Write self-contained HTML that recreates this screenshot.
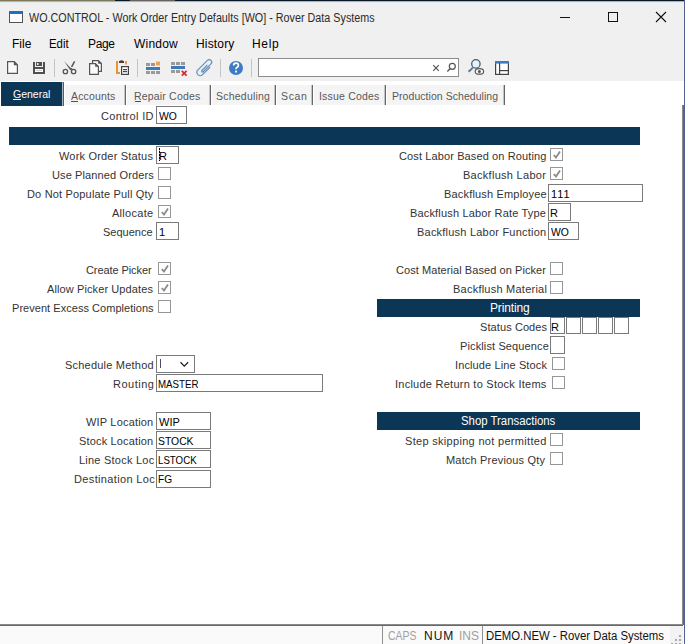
<!DOCTYPE html>
<html><head><meta charset="utf-8">
<style>
html,body{margin:0;padding:0;}
body{width:685px;height:644px;overflow:hidden;position:relative;background:#f0f0f0;font-family:"Liberation Sans",sans-serif;color:#333;}
.a{position:absolute;}
.t{position:absolute;white-space:pre;line-height:20px;height:20px;}
.inp{position:absolute;box-sizing:border-box;border:1px solid #7a7a7a;background:#fff;height:18px;}
.cb{position:absolute;box-sizing:border-box;width:13px;height:13px;border:1px solid #969696;background:#fff;}
.bar{position:absolute;background:#0b3656;height:18px;}
.tabbg{position:absolute;background:#f4f4f4;top:85px;height:20px;}
.tsep{position:absolute;top:85px;width:2px;height:20px;background:linear-gradient(90deg,#c4c4c4 0,#c4c4c4 50%,#666 50%);}
</style></head>
<body>
<!-- top strip -->
<div class="a" style="left:0;top:0;width:685px;height:1px;background:#0b1826"></div>
<div class="a" style="left:0;top:0;width:115px;height:1px;background:#7f7b5a"></div>
<div class="a" style="left:130px;top:0;width:45px;height:1px;background:#6c625c"></div>
<div class="a" style="left:0;top:1px;width:685px;height:1px;background:#a8b4be"></div>
<div class="a" style="left:0;top:2px;width:685px;height:1px;background:#e6eef4"></div>
<!-- right border -->
<div class="a" style="left:684px;top:0;width:1px;height:644px;background:#52628e;z-index:5"></div>

<!-- title icon & controls -->
<div class="a" style="left:9px;top:11px;width:14px;height:12px;box-sizing:border-box;border:1px solid #555;border-top:3px solid #1f6fc8;background:#fcfcfc"></div>
<div class="a" style="left:560px;top:17px;width:10px;height:1px;background:#111"></div>
<div class="a" style="left:608px;top:12px;width:10px;height:10px;box-sizing:border-box;border:1px solid #111"></div>
<svg class="a" style="left:655px;top:11px" width="12" height="12" viewBox="0 0 12 12"><path d="M1 1L11 11M11 1L1 11" stroke="#111" stroke-width="1.1"/></svg>

<!-- toolbar -->
<svg class="a" style="left:0;top:56px" width="520" height="24" viewBox="0 56 520 24">
 <path d="M7.6 61.6H14.2L17.4 64.8V73.4H7.6Z" fill="#fbfbfb" stroke="#555" stroke-width="1.2"/>
 <path d="M13.8 61.2V65.2H17.8Z" fill="#555"/>
 <rect x="33" y="62" width="2" height="12" fill="#505050"/>
 <rect x="43" y="62" width="2" height="12" fill="#505050"/>
 <rect x="35" y="67" width="8" height="2" fill="#505050"/>
 <rect x="35" y="72" width="8" height="2" fill="#505050"/>
 <rect x="36" y="62" width="6" height="4" fill="#505050"/>
 <rect x="37" y="63" width="1.5" height="2" fill="#f0f0f0"/>
 <rect x="35" y="69" width="8" height="3" fill="#fafafa"/>
 <rect x="36" y="70" width="6" height="1" fill="#d0d0d0"/>
 <rect x="54" y="59" width="1" height="18" fill="#c4c4c4"/>
 <path d="M64.2 61.2L71.8 69.2L70.2 70.2Z" fill="#555"/>
 <path d="M74.6 61.4L71.6 66.8" stroke="#555" stroke-width="1.5"/>
 <path d="M70.5 69.5L72 68.2" stroke="#555" stroke-width="1.2"/>
 <circle cx="65.4" cy="71.5" r="2.2" fill="none" stroke="#555" stroke-width="1.3"/>
 <circle cx="73.6" cy="71.5" r="2.2" fill="none" stroke="#555" stroke-width="1.3"/>
 <path d="M92.6 63.6V60.6H98.4L101.4 63.6V71.4H98.6" fill="#fafafa" stroke="#555" stroke-width="1.2"/>
 <path d="M98.2 60.2V63.8H101.8Z" fill="#555"/>
 <path d="M89.6 63.6H95.4L98.4 66.6V74.4H89.6Z" fill="#fafafa" stroke="#555" stroke-width="1.2"/>
 <path d="M95.2 63.2V66.8H98.8Z" fill="#555"/>
 <rect x="116" y="61" width="2" height="13" fill="#f0902e"/>
 <rect x="118" y="72" width="2" height="2" fill="#f0902e"/>
 <rect x="125" y="61" width="2" height="3.5" fill="#e8a050"/>
 <path d="M119 63V61.2Q121.5 59.4 124 61.2V63Z" fill="#553c2c"/>
 <rect x="121.6" y="66.6" width="6.8" height="7.8" fill="#fff" stroke="#444" stroke-width="1.2"/>
 <rect x="123" y="69" width="4" height="1.2" fill="#444"/>
 <rect x="123" y="71" width="4" height="1.2" fill="#444"/>
 <rect x="137" y="59" width="1" height="18" fill="#c4c4c4"/>
 <rect x="146" y="63" width="4" height="3" fill="#9a9a9a"/><rect x="151" y="63" width="4" height="3" fill="#9a9a9a"/><rect x="156" y="61.5" width="4" height="4" fill="#f0a24a"/>
 <rect x="146" y="67" width="14" height="3" fill="#3f79b6"/>
 <rect x="146" y="71" width="4" height="3" fill="#9a9a9a"/><rect x="151" y="71" width="4" height="3" fill="#9a9a9a"/><rect x="156" y="71" width="4" height="3" fill="#9a9a9a"/>
 <rect x="171" y="62" width="4" height="3" fill="#9a9a9a"/><rect x="176" y="62" width="4" height="3" fill="#9a9a9a"/><rect x="181" y="62" width="4" height="3" fill="#9a9a9a"/>
 <rect x="171" y="66" width="14" height="3" fill="#3f79b6"/>
 <rect x="171" y="70" width="4" height="3" fill="#9a9a9a"/><rect x="176" y="70" width="4" height="3" fill="#9a9a9a"/>
 <path d="M181.8 70.8L186.6 75.6M186.6 70.8L181.8 75.6" stroke="#d02838" stroke-width="1.7"/>
 <g transform="translate(205 67.5) rotate(-45)">
  <path d="M4 3.3H-6.7A3.3 3.3 0 0 1 -6.7 -3.3H6.7A2.5 2.5 0 0 1 6.7 1.7H-4.3A0.9 0.9 0 0 1 -4.3 -0.1H3.5" fill="#e4f2fb" stroke="#6a8cb6" stroke-width="1.15"/>
 </g>
 <rect x="220" y="59" width="1" height="18" fill="#c4c4c4"/>
 <circle cx="236" cy="68" r="7" fill="#3f7bc4"/>
 <path d="M233.6 65.6Q233.6 63.2 236 63.2Q238.4 63.2 238.4 65.4Q238.4 66.8 236.8 67.6Q236 68 236 69.2" fill="none" stroke="#fff" stroke-width="1.7"/>
 <rect x="235.1" y="70.6" width="1.9" height="1.9" fill="#fff"/>
 <rect x="251" y="59" width="1" height="18" fill="#c4c4c4"/>
 <rect x="258.5" y="58.5" width="200" height="18" fill="#fff" stroke="#8c8c8c"/>
 <path d="M433.2 65.2L438.8 70.8M438.8 65.2L433.2 70.8" stroke="#555" stroke-width="1.2"/>
 <circle cx="452.3" cy="66.3" r="3" fill="none" stroke="#555" stroke-width="1.2"/>
 <path d="M450 68.8L447.3 71.5" stroke="#555" stroke-width="1.4"/>
 <circle cx="475.9" cy="63.9" r="4.2" fill="#e6f2fa" stroke="#4c5a68" stroke-width="1.3"/>
 <path d="M472.9 67.6L468.6 71.8" stroke="#5878a0" stroke-width="2"/>
 <ellipse cx="479.4" cy="71.4" rx="4.2" ry="2.8" fill="#fff" stroke="#555" stroke-width="1.2"/>
 <circle cx="479.4" cy="71.4" r="1.5" fill="#555"/>
 <rect x="495.6" y="61.6" width="12.8" height="12.8" fill="#fff" stroke="#444" stroke-width="1.2"/>
 <rect x="495" y="61" width="14" height="2.6" fill="#3f7bc4"/>
 <rect x="499" y="63" width="1.2" height="11" fill="#444"/>
 <rect x="499" y="70" width="9" height="1.2" fill="#444"/>
</svg>

<!-- content area -->
<div class="a" style="left:0;top:81px;width:684px;height:543px;background:#fff"></div>
<div class="a" style="left:682px;top:105px;width:1px;height:520px;background:#8a8a8a"></div><div class="a" style="left:683px;top:105px;width:1px;height:520px;background:#606878"></div>

<!-- tabs -->
<div class="a" style="left:1px;top:82px;width:61px;height:24px;background:#0b3656"></div>
<div class="a" style="left:62px;top:82px;width:1px;height:24px;background:#a8b6c4"></div><div class="a" style="left:63px;top:82px;width:1px;height:24px;background:#5a5a5a"></div>
<div class="a" style="left:13px;top:99px;width:8px;height:1px;background:#fff"></div>
<div class="tabbg" style="left:65px;width:59px"></div>
<div class="a" style="left:71px;top:101px;width:7px;height:1px;background:#505050"></div>
<div class="tsep" style="left:124px"></div>
<div class="tabbg" style="left:127px;width:82px"></div>
<div class="a" style="left:135px;top:101px;width:6px;height:1px;background:#505050"></div>
<div class="tsep" style="left:209px"></div>
<div class="tabbg" style="left:212px;width:62px"></div>
<div class="tsep" style="left:274px"></div>
<div class="tabbg" style="left:277px;width:34px"></div>
<div class="tsep" style="left:311px"></div>
<div class="tabbg" style="left:314px;width:70px"></div>
<div class="tsep" style="left:384px"></div>
<div class="tabbg" style="left:387px;width:116px"></div>
<div class="tsep" style="left:503px"></div>

<!-- bars -->
<div class="bar" style="left:9px;top:127px;width:631px"></div>
<div class="bar" style="left:377px;top:299px;width:263px"></div>
<div class="bar" style="left:377px;top:412px;width:263px"></div>

<!-- inputs -->
<div class="inp" style="left:156px;top:106px;width:31px"></div>
<div class="inp" style="left:156px;top:146px;width:23px"></div>
<div class="a" style="left:159px;top:148px;width:1px;height:13px;background:repeating-linear-gradient(180deg,#000 0,#000 2px,#bbb 2px,#bbb 3px)"></div>
<div class="inp" style="left:156px;top:222px;width:23px"></div>
<div class="inp" style="left:156px;top:355px;width:39px;height:18px"></div>
<svg class="a" style="left:179px;top:361px" width="12" height="8" viewBox="0 0 12 8"><path d="M1.5 1.3L5.3 5.1L9.1 1.3" fill="none" stroke="#222" stroke-width="1.3"/></svg>
<div class="a" style="left:160px;top:359px;width:1px;height:9px;background:#4a4e66"></div>
<div class="inp" style="left:156px;top:374px;width:167px"></div>
<div class="inp" style="left:156px;top:412px;width:55px"></div>
<div class="inp" style="left:156px;top:431px;width:55px"></div>
<div class="inp" style="left:156px;top:450px;width:55px"></div>
<div class="inp" style="left:156px;top:470px;width:55px"></div>
<div class="inp" style="left:548px;top:184px;width:95px"></div>
<div class="inp" style="left:548px;top:203px;width:23px"></div>
<div class="inp" style="left:548px;top:222px;width:31px"></div>
<div class="inp" style="left:550px;top:317px;width:15px;height:17px"></div>
<div class="inp" style="left:566px;top:317px;width:15px;height:17px"></div>
<div class="inp" style="left:582px;top:317px;width:15px;height:17px"></div>
<div class="inp" style="left:598px;top:317px;width:15px;height:17px"></div>
<div class="inp" style="left:614px;top:317px;width:15px;height:17px"></div>
<div class="inp" style="left:550px;top:336px;width:15px"></div>

<!-- checkboxes -->
<div class="cb" style="left:158px;top:167px"></div>
<div class="cb" style="left:158px;top:186px"></div>
<div class="cb" style="left:158px;top:205px"><svg class="a" style="left:0;top:0" width="11" height="11" viewBox="0 0 11 11"><path d="M2.8 6L5 8.6L9 2.5" fill="none" stroke="#8a8a8a" stroke-width="1.8"/></svg></div>
<div class="cb" style="left:158px;top:262px"><svg class="a" style="left:0;top:0" width="11" height="11" viewBox="0 0 11 11"><path d="M2.8 6L5 8.6L9 2.5" fill="none" stroke="#8a8a8a" stroke-width="1.8"/></svg></div>
<div class="cb" style="left:158px;top:281px"><svg class="a" style="left:0;top:0" width="11" height="11" viewBox="0 0 11 11"><path d="M2.8 6L5 8.6L9 2.5" fill="none" stroke="#8a8a8a" stroke-width="1.8"/></svg></div>
<div class="cb" style="left:158px;top:300px"></div>
<div class="cb" style="left:550px;top:148px"><svg class="a" style="left:0;top:0" width="11" height="11" viewBox="0 0 11 11"><path d="M2.8 6L5 8.6L9 2.5" fill="none" stroke="#8a8a8a" stroke-width="1.8"/></svg></div>
<div class="cb" style="left:550px;top:167px"><svg class="a" style="left:0;top:0" width="11" height="11" viewBox="0 0 11 11"><path d="M2.8 6L5 8.6L9 2.5" fill="none" stroke="#8a8a8a" stroke-width="1.8"/></svg></div>
<div class="cb" style="left:550px;top:262px"></div>
<div class="cb" style="left:550px;top:281px"></div>
<div class="cb" style="left:552px;top:357px"></div>
<div class="cb" style="left:552px;top:376px"></div>
<div class="cb" style="left:550px;top:433px"></div>
<div class="cb" style="left:550px;top:452px"></div>

<!-- status bar -->
<div class="a" style="left:0;top:625px;width:684px;height:19px;background:#fafafa"></div>
<div class="a" style="left:0;top:624px;width:683px;height:1px;background:#8a8a8a"></div>
<div class="a" style="left:0;top:625px;width:683px;height:1px;background:#686868"></div>
<div class="a" style="left:382px;top:626px;width:1px;height:18px;background:#8e8e8e"></div>
<div class="a" style="left:482px;top:626px;width:1px;height:18px;background:#8e8e8e"></div>
<div class="a" style="left:670px;top:626px;width:13px;height:18px;background:#f2f2f2"></div>
<div class="a" style="left:679px;top:635px;width:2px;height:2px;background:#a8a8a8"></div>
<div class="a" style="left:675px;top:639px;width:2px;height:2px;background:#a8a8a8"></div>
<div class="a" style="left:679px;top:639px;width:2px;height:2px;background:#a8a8a8"></div>
<div class="a" style="left:671px;top:643px;width:2px;height:1px;background:#a8a8a8"></div>
<div class="a" style="left:675px;top:643px;width:2px;height:1px;background:#a8a8a8"></div>
<div class="a" style="left:679px;top:643px;width:2px;height:1px;background:#a8a8a8"></div>
<div class="t" id="t0" style="left:29.00px;top:8px;font-size:12px;color:#2a2a2a;letter-spacing:0.018px;transform:scaleX(0.8958);transform-origin:0 0;">WO.CONTROL - Work Order Entry Defaults [WO] - Rover Data Systems</div>
<div class="t" id="t1" style="left:12.00px;top:34px;font-size:12px;color:#000;letter-spacing:0.000px;">File</div>
<div class="t" id="t2" style="left:49.00px;top:34px;font-size:12px;color:#000;letter-spacing:0.000px;transform:scaleX(0.9474);transform-origin:0 0;">Edit</div>
<div class="t" id="t3" style="left:88.00px;top:34px;font-size:12px;color:#000;letter-spacing:-0.333px;">Page</div>
<div class="t" id="t4" style="left:134.00px;top:34px;font-size:12px;color:#000;letter-spacing:0.200px;">Window</div>
<div class="t" id="t5" style="left:196.00px;top:34px;font-size:12px;color:#000;letter-spacing:0.167px;">History</div>
<div class="t" id="t6" style="left:252.00px;top:34px;font-size:12px;color:#000;letter-spacing:0.667px;">Help</div>
<div class="t" id="t7" style="left:13.00px;top:84px;font-size:10.5px;color:#fff;letter-spacing:0.000px;">General</div>
<div class="t" id="t8" style="left:71.00px;top:86px;font-size:10.5px;color:#585858;letter-spacing:0.143px;">Accounts</div>
<div class="t" id="t9" style="left:134.00px;top:86px;font-size:10.5px;color:#585858;letter-spacing:0.182px;">Repair Codes</div>
<div class="t" id="t10" style="left:216.00px;top:86px;font-size:10.5px;color:#585858;letter-spacing:0.222px;">Scheduling</div>
<div class="t" id="t11" style="left:281.00px;top:86px;font-size:10.5px;color:#585858;letter-spacing:0.667px;">Scan</div>
<div class="t" id="t12" style="left:319.00px;top:86px;font-size:10.5px;color:#585858;letter-spacing:0.200px;">Issue Codes</div>
<div class="t" id="t13" style="left:392.00px;top:86px;font-size:10.5px;color:#585858;letter-spacing:0.050px;">Production Scheduling</div>
<div class="t" id="t14" style="left:101.00px;top:106px;font-size:11px;color:#333;letter-spacing:0.333px;">Control ID</div>
<div class="t" id="t15" style="left:59.00px;top:146px;font-size:11px;color:#333;letter-spacing:0.188px;">Work Order Status</div>
<div class="t" id="t16" style="left:52.00px;top:165px;font-size:11px;color:#333;letter-spacing:0.118px;">Use Planned Orders</div>
<div class="t" id="t17" style="left:27.00px;top:184px;font-size:11px;color:#333;letter-spacing:0.174px;">Do Not Populate Pull Qty</div>
<div class="t" id="t18" style="left:112.00px;top:203px;font-size:11px;color:#333;letter-spacing:0.286px;">Allocate</div>
<div class="t" id="t19" style="left:103.00px;top:222px;font-size:11px;color:#333;letter-spacing:0.000px;">Sequence</div>
<div class="t" id="t20" style="left:86.00px;top:260px;font-size:11px;color:#333;letter-spacing:-0.083px;">Create Picker</div>
<div class="t" id="t21" style="left:47.00px;top:279px;font-size:11px;color:#333;letter-spacing:0.105px;">Allow Picker Updates</div>
<div class="t" id="t22" style="left:12.00px;top:298px;font-size:11px;color:#333;letter-spacing:0.040px;">Prevent Excess Completions</div>
<div class="t" id="t23" style="left:65.00px;top:355px;font-size:11px;color:#333;letter-spacing:0.214px;">Schedule Method</div>
<div class="t" id="t24" style="left:113.00px;top:374px;font-size:11px;color:#333;letter-spacing:0.500px;">Routing</div>
<div class="t" id="t25" style="left:86.00px;top:412px;font-size:11px;color:#333;letter-spacing:0.182px;">WIP Location</div>
<div class="t" id="t26" style="left:79.00px;top:431px;font-size:11px;color:#333;letter-spacing:0.154px;">Stock Location</div>
<div class="t" id="t27" style="left:79.00px;top:450px;font-size:11px;color:#333;letter-spacing:0.231px;">Line Stock Loc</div>
<div class="t" id="t28" style="left:74.00px;top:469px;font-size:11px;color:#333;letter-spacing:0.357px;">Destination Loc</div>
<div class="t" id="t29" style="left:399.00px;top:146px;font-size:11px;color:#333;letter-spacing:0.115px;">Cost Labor Based on Routing</div>
<div class="t" id="t30" style="left:463.00px;top:165px;font-size:11px;color:#333;letter-spacing:0.286px;">Backflush Labor</div>
<div class="t" id="t31" style="left:444.00px;top:184px;font-size:11px;color:#333;letter-spacing:0.176px;">Backflush Employee</div>
<div class="t" id="t32" style="left:410.00px;top:203px;font-size:11px;color:#333;letter-spacing:0.167px;">Backflush Labor Rate Type</div>
<div class="t" id="t33" style="left:417.00px;top:222px;font-size:11px;color:#333;letter-spacing:0.217px;">Backflush Labor Function</div>
<div class="t" id="t34" style="left:396.00px;top:260px;font-size:11px;color:#333;letter-spacing:0.071px;">Cost Material Based on Picker</div>
<div class="t" id="t35" style="left:453.00px;top:279px;font-size:11px;color:#333;letter-spacing:0.235px;">Backflush Material</div>
<div class="t" id="t36" style="left:480.00px;top:317px;font-size:11px;color:#333;letter-spacing:0.091px;">Status Codes</div>
<div class="t" id="t37" style="left:460.00px;top:336px;font-size:11px;color:#333;letter-spacing:0.125px;">Picklist Sequence</div>
<div class="t" id="t38" style="left:455.00px;top:355px;font-size:11px;color:#333;letter-spacing:0.118px;">Include Line Stock</div>
<div class="t" id="t39" style="left:395.00px;top:374px;font-size:11px;color:#333;letter-spacing:0.250px;">Include Return to Stock Items</div>
<div class="t" id="t40" style="left:405.00px;top:431px;font-size:11px;color:#333;letter-spacing:0.308px;">Step skipping not permitted</div>
<div class="t" id="t41" style="left:446.00px;top:450px;font-size:11px;color:#333;letter-spacing:0.176px;">Match Previous Qty</div>
<div class="t" id="t42" style="left:490.00px;top:298px;font-size:12px;color:#fff;letter-spacing:-0.143px;">Printing</div>
<div class="t" id="t43" style="left:461.00px;top:411px;font-size:12px;color:#fff;letter-spacing:0.000px;transform:scaleX(0.9485);transform-origin:0 0;">Shop Transactions</div>
<div class="t" id="t44" style="left:159.00px;top:106px;font-size:11px;color:#000;letter-spacing:0.000px;transform:scaleX(0.9444);transform-origin:0 0;">WO</div>
<div class="t" id="t45" style="left:159.00px;top:146px;font-size:11px;color:#000;letter-spacing:0.000px;">R</div>
<div class="t" id="t46" style="left:159.00px;top:222px;font-size:11px;color:#000;letter-spacing:0.000px;">1</div>
<div class="t" id="t47" style="left:158.00px;top:374px;font-size:11px;color:#000;letter-spacing:0.000px;transform:scaleX(0.8837);transform-origin:0 0;">MASTER</div>
<div class="t" id="t48" style="left:159.00px;top:412px;font-size:11px;color:#000;letter-spacing:0.000px;">WIP</div>
<div class="t" id="t49" style="left:158.00px;top:431px;font-size:11px;color:#000;letter-spacing:0.000px;transform:scaleX(0.9429);transform-origin:0 0;">STOCK</div>
<div class="t" id="t50" style="left:158.00px;top:450px;font-size:11px;color:#000;letter-spacing:0.000px;transform:scaleX(0.8810);transform-origin:0 0;">LSTOCK</div>
<div class="t" id="t51" style="left:158.00px;top:469px;font-size:11px;color:#000;letter-spacing:0.000px;transform:scaleX(0.9231);transform-origin:0 0;">FG</div>
<div class="t" id="t52" style="left:551.00px;top:184px;font-size:11px;color:#000;letter-spacing:1.000px;">111</div>
<div class="t" id="t53" style="left:550.00px;top:203px;font-size:11px;color:#000;letter-spacing:0.000px;">R</div>
<div class="t" id="t54" style="left:551.00px;top:222px;font-size:11px;color:#000;letter-spacing:0.000px;transform:scaleX(0.9444);transform-origin:0 0;">WO</div>
<div class="t" id="t55" style="left:551.00px;top:317px;font-size:11px;color:#000;letter-spacing:0.000px;">R</div>
<div class="t" id="t56" style="left:388.00px;top:626px;font-size:12px;color:#a0a0a0;letter-spacing:0.000px;transform:scaleX(0.8710);transform-origin:0 0;">CAPS</div>
<div class="t" id="t57" style="left:424.00px;top:626px;font-size:12px;color:#111;letter-spacing:1.000px;">NUM</div>
<div class="t" id="t58" style="left:459.00px;top:626px;font-size:12px;color:#a0a0a0;letter-spacing:0.000px;">INS</div>
<div class="t" id="t59" style="left:486.00px;top:626px;font-size:12px;color:#111;letter-spacing:0.000px;transform:scaleX(0.9462);transform-origin:0 0;">DEMO.NEW - Rover Data Systems</div>
</body></html>
